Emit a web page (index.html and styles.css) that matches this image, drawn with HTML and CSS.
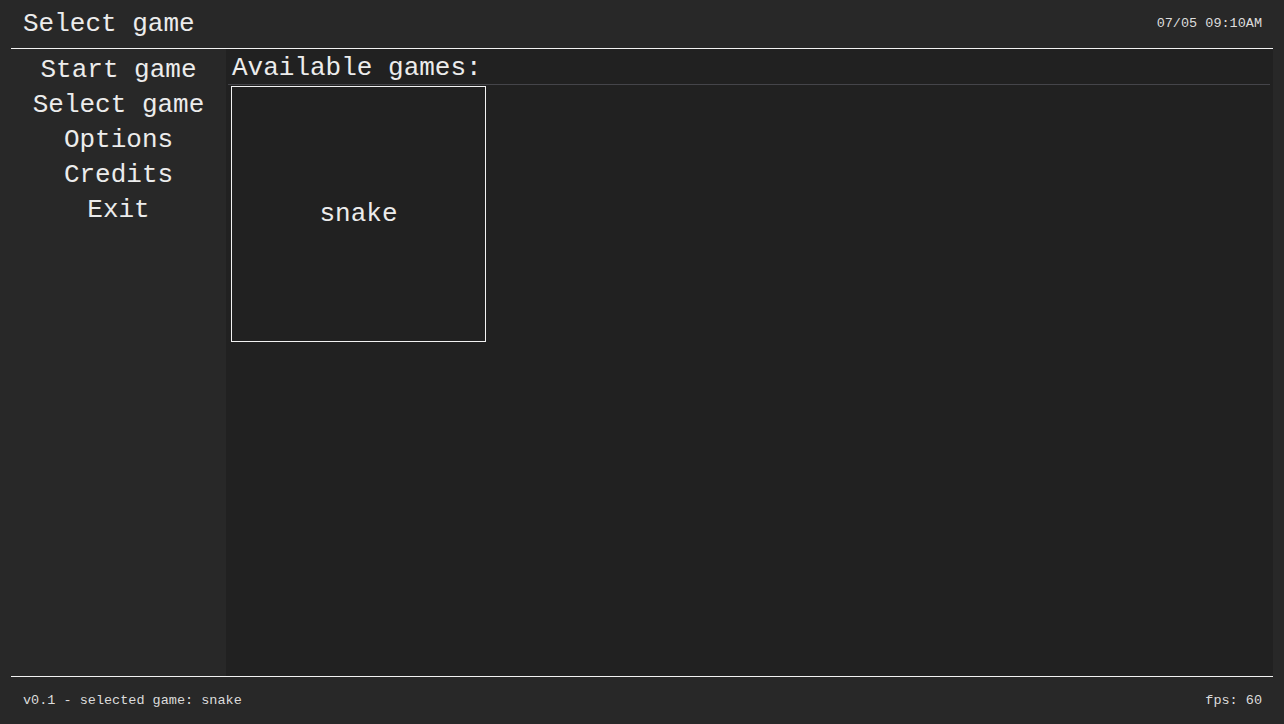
FILE: index.html
```html
<!DOCTYPE html>
<html>
<head>
<meta charset="utf-8">
<link rel="stylesheet" href="styles.css">
</head>
<body>
<div class="app">
  <header class="topbar">
    <div class="title">Select game</div>
    <div class="clock">07/05 09:10AM</div>
  </header>
  <div class="main">
    <nav class="sidebar">
      <div class="menu-item">Start game</div>
      <div class="menu-item">Select game</div>
      <div class="menu-item">Options</div>
      <div class="menu-item">Credits</div>
      <div class="menu-item">Exit</div>
    </nav>
    <section class="content">
      <div class="heading">Available games:</div>
      <div class="games">
        <div class="game-card">snake</div>
      </div>
    </section>
  </div>
  <footer class="bottombar">
    <div class="status">v0.1 - selected game: snake</div>
    <div class="fps">fps: 60</div>
  </footer>
</div>
</body>
</html>
```
FILE: styles.css
```css
html, body {
  margin: 0;
  padding: 0;
  background: #282828;
  color: #ececec;
  font-family: "Liberation Mono", "DejaVu Sans Mono", monospace;
}
.app {
  width: 1284px;
  height: 724px;
  padding: 0 11px;
  box-sizing: border-box;
  display: flex;
  flex-direction: column;
}
.topbar {
  height: 48px;
  border-bottom: 1px solid #f2f2f2;
  display: flex;
  align-items: center;
  justify-content: space-between;
  padding: 0 11px 0 12px;
  flex: none;
}
.title {
  font-size: 26px;
  line-height: 30px;
}
.clock {
  font-size: 13.5px;
  color: #dcdcdc;
  margin-top: -2px;
}
.main {
  flex: 1;
  display: flex;
  min-height: 0;
}
.sidebar {
  width: 215px;
  flex: none;
  display: flex;
  flex-direction: column;
  align-items: center;
  padding-top: 4px;
}
.menu-item {
  font-size: 26px;
  line-height: 35px;
}
.content {
  flex: 1;
  background: #212121;
  padding: 3px 3px 0 2px;
}
.heading {
  font-size: 26px;
  line-height: 32px;
  padding-left: 4px;
  border-bottom: 1px solid #45454a;
}
.games {
  display: flex;
  padding: 1px 3px;
}
.game-card {
  width: 253px;
  height: 254px;
  border: 1px solid #f2f2f2;
  display: flex;
  align-items: center;
  justify-content: center;
  font-size: 26px;
  box-sizing: content-box;
}
.bottombar {
  height: 47px;
  flex: none;
  border-top: 1px solid #f2f2f2;
  display: flex;
  align-items: center;
  justify-content: space-between;
  padding: 0 11px 0 12px;
  font-size: 13.5px;
  color: #dcdcdc;
}
```
